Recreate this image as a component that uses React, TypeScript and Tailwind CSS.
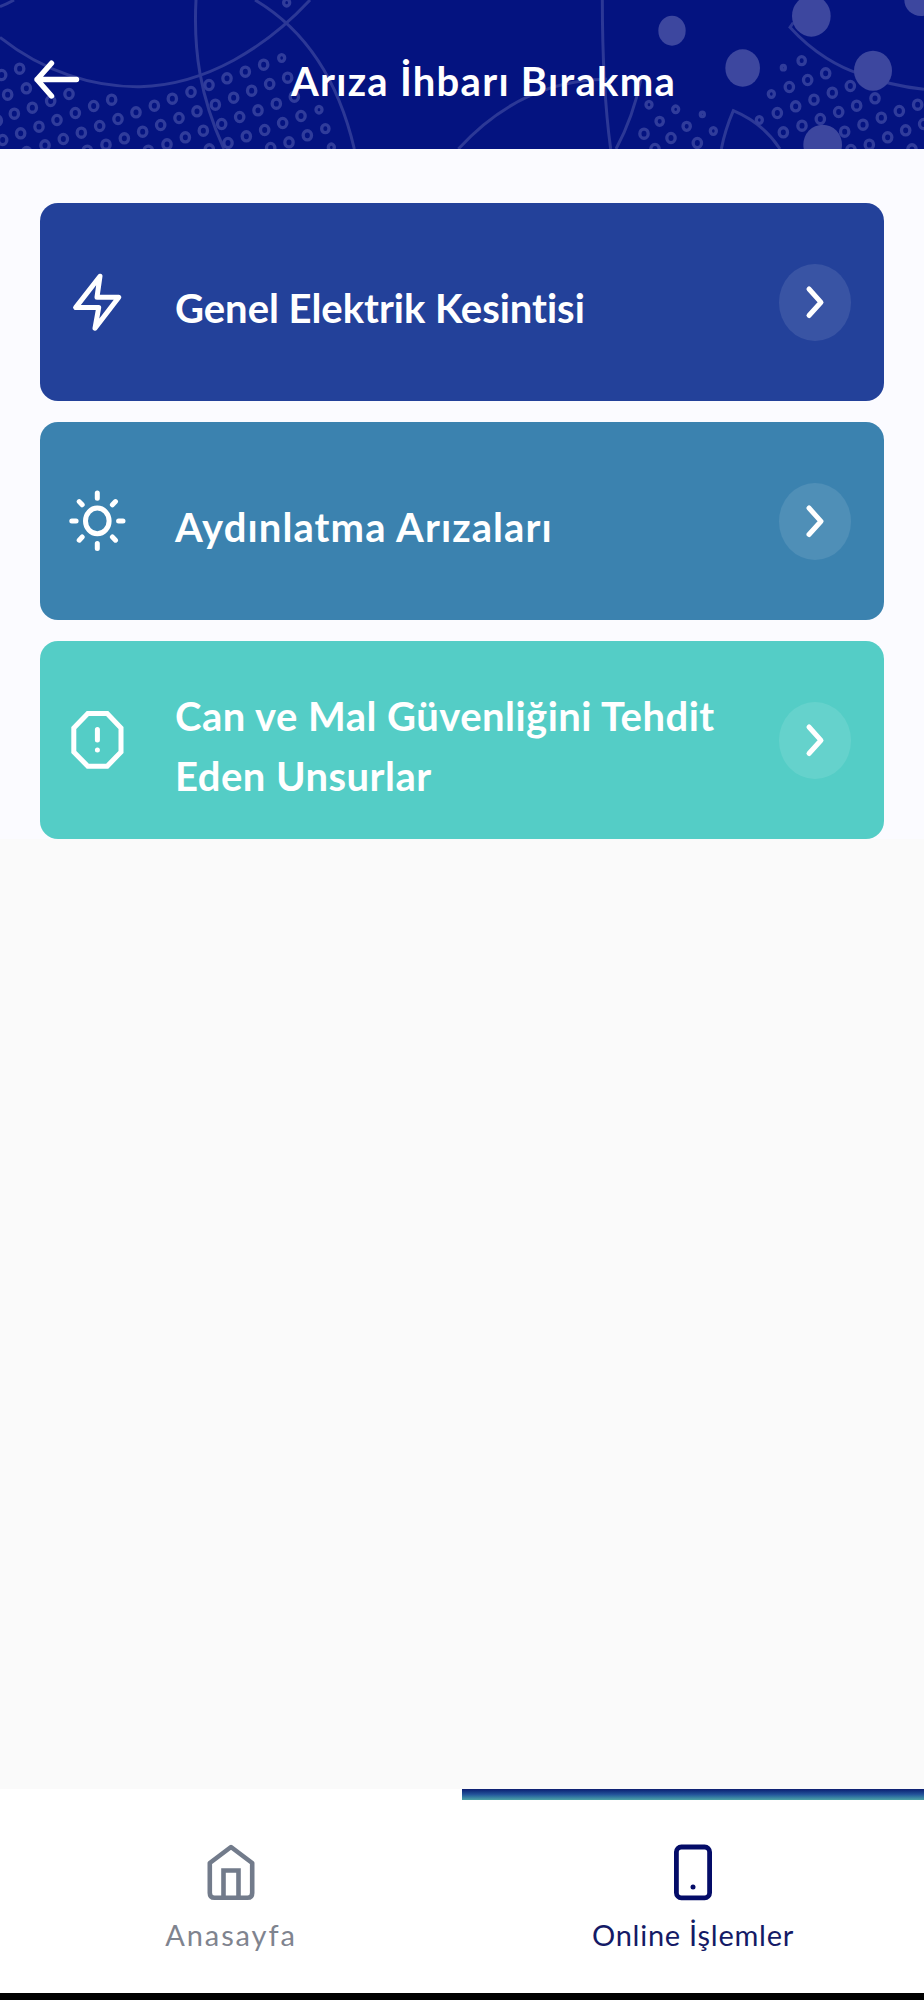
import type { ReactNode } from 'react';

interface ActionCardProps {
  title: string;
  className: string;
  icon: ReactNode;
  spacing: string;
}

// [x, y, size] in header pattern units (3 per pixel)
const rings: number[][] = [
  [5, 225], [59, 206], [23, 284], [79, 265], [43, 341], [97, 323], [152, 303], [207, 282], [-8, 362],
  [8, 420], [62, 400], [117, 380], [171, 360], [226, 339], [281, 318], [335, 299],
  [135, 436], [190, 417], [244, 398], [299, 378], [354, 357], [408, 337], [463, 317], [517, 296],
  [573, 276], [627, 255], [681, 235], [736, 215], [791, 194], [845, 174, 9],
  [318, 434], [373, 415], [428, 395], [482, 375], [537, 354], [591, 334], [646, 314], [701, 293],
  [755, 272], [809, 252], [863, 233], [501, 433], [556, 412], [610, 392], [665, 372], [719, 351],
  [774, 331], [829, 311], [883, 290], [684, 429], [739, 409], [794, 390], [848, 369], [903, 348],
  [957, 329, 9], [867, 427], [922, 406], [976, 386, 11], [262, 452], [445, 452], [628, 448],
  [812, 444], [994, 442, 9], [80, 456], [860, 8, 9],
  [2350, 203, 6], [2405, 182, 11], [2314, 282, 9], [2368, 261], [2423, 240], [2477, 220],
  [2278, 360, 9], [2332, 339], [2387, 319], [2442, 299], [2497, 278], [2551, 258],
  [2350, 397], [2406, 377], [2461, 357], [2516, 336], [2570, 317], [2625, 295],
  [2534, 395], [2589, 374], [2644, 353], [2698, 333], [2753, 314],
  [2553, 450], [2608, 434], [2663, 412], [2717, 391], [2771, 372], [2736, 448],
  [1947, 314, 9], [2027, 328, 9], [2107, 343, 6], [1932, 401], [1979, 364, 11], [2013, 414],
  [2060, 379, 11], [1965, 447], [2092, 429], [2140, 393, 9],
];

const bubbles: number[][] = [
  [2016, 92, 41, 45], [2228, 204, 52, 56], [2434, 48, 58, 62],
  [2619, 212, 57, 60], [2468, 434, 58, 60], [2763, 0, 50, 48],
];

function HeaderPattern() {
  return (
    <svg className="absolute inset-0 h-full w-full" viewBox="0 0 2772 447" preserveAspectRatio="none" fill="none">
      <g stroke="#2c3896" strokeWidth="9">
        <path d="M0 20Q25 10 42 0" />
        <path d="M0 112C130 215 280 262 420 260C620 255 800 140 930 0" />
        <path d="M588 0C580 150 600 290 672 447" />
        <path d="M765 0C900 80 1010 220 1063 447" />
        <path d="M1375 447C1500 310 1650 240 1820 238" />
        <path d="M1807 0C1807 150 1812 300 1832 447" />
        <path d="M1848 447Q1900 350 1922 240" />
        <path d="M2164 447Q2175 390 2200 332Q2290 370 2340 447" />
        <path d="M2380 68L2370 82C2440 160 2520 203 2580 222Q2670 257 2772 268" />
      </g>
      <g stroke="#303c9b" strokeWidth="10">
        {rings.map(([x, y, r = 12.5]) => (
          <ellipse key={`${x}-${y}`} cx={x} cy={y} rx={r} ry={r * 1.1} />
        ))}
      </g>
      <g fill="#3d479f">
        {bubbles.map(([x, y, rx, ry]) => (
          <ellipse key={`${x}-${y}`} cx={x} cy={y} rx={rx} ry={ry} />
        ))}
      </g>
    </svg>
  );
}

function BoltIcon() {
  return (
    <svg className="h-16 w-16" viewBox="0 0 64 64" fill="none" stroke="currentColor" strokeWidth="5" strokeLinecap="round" strokeLinejoin="round">
      <path d="M35 6.2L10.6 37.6H33.7L30 58.3L53.8 27.2H32Z" />
    </svg>
  );
}

function SunIcon() {
  return (
    <svg className="h-16 w-16" viewBox="0 0 64 64" fill="none" stroke="currentColor" strokeWidth="5" strokeLinecap="round">
      <ellipse cx="32.3" cy="31.9" rx="11.8" ry="12.8" />
      <path d="M32.3 4V9.2M32.3 54.4V59.6M6.8 31.9H11.1M53.6 31.9H58" />
      <path d="M14.2 12.6L17.2 15.8M50.5 12.6L47.4 15.8M14.2 51.2L17.2 48M50.5 51.2L47.4 48" />
    </svg>
  );
}

function AlertIcon() {
  return (
    <svg className="h-16 w-16" viewBox="0 0 64 64" fill="none" stroke="currentColor" strokeWidth="5" strokeLinecap="round">
      <path d="M22.8 5.6H42.2L56 20V44L42.2 58.2H22.8L8.8 44V20Z" />
      <path d="M32.4 21.5V32M32.4 41.9V42.1" />
    </svg>
  );
}

function ActionCard({ title, className, icon, spacing }: ActionCardProps) {
  return (
    <button className={`flex h-[198px] w-full items-center rounded-[18px] pr-[33px] pl-[25px] text-left text-white ${className}`}>
      {icon}
      <span className={`ml-[46px] flex-1 pt-[12px] text-[40px] leading-[60px] font-bold whitespace-pre-line ${spacing}`}>
        {title}
      </span>
      <span className="flex h-[77px] w-[72px] items-center justify-center rounded-[50%] bg-white/10">
        <svg className="h-9 w-6" viewBox="0 0 24 36" fill="none" stroke="currentColor" strokeWidth="5" strokeLinecap="round" strokeLinejoin="round">
          <path d="M6 5L18 18.3L6 31.5" />
        </svg>
      </span>
    </button>
  );
}

export default function App() {
  return (
    <div className="flex h-[2000px] w-[924px] flex-col overflow-hidden bg-[#fafafa] font-['Lato',sans-serif]">
      <header className="relative h-[149px] bg-[#041380] text-white">
        <HeaderPattern />
        <div className="relative flex h-full items-center">
          <button className="ml-8 pt-[9px]" aria-label="Geri">
            <svg className="h-12 w-12" viewBox="0 0 48 48" fill="none" stroke="currentColor" strokeWidth="5.4" strokeLinecap="round" strokeLinejoin="round">
              <path d="M44.5 24.5H5M19.5 8.2L5 24.5L19.5 41" />
            </svg>
          </button>
          <h1 className="ml-[211px] pt-[12px] text-[40px] leading-[60px] font-bold tracking-[1.28px] whitespace-nowrap">Arıza İhbarı Bırakma</h1>
        </div>
      </header>

      <main className="flex-1">
        <div className="flex flex-col gap-[21px] bg-[#fbfbff] px-10 pt-[54px]">
          <ActionCard title="Genel Elektrik Kesintisi" className="bg-[#23419a]" icon={<BoltIcon />} spacing="tracking-[-0.03px]" />
          <ActionCard title="Aydınlatma Arızaları" className="bg-[#3b82af]" icon={<SunIcon />} spacing="tracking-[1.1px]" />
          <ActionCard title={'Can ve Mal Güvenliğini Tehdit\nEden Unsurlar'} className="bg-[#54cdc6]" icon={<AlertIcon />} spacing="tracking-[0.47px]" />
        </div>
      </main>

      <nav className="grid h-[204px] grid-cols-2 bg-white text-[29px] leading-10">
        <button className="flex flex-col items-center pt-[52px] text-[#7f848f]">
          <svg className="h-[62px] w-14" viewBox="0 0 56 62" fill="none" stroke="#727b8b" strokeWidth="4.6" strokeLinejoin="round">
            <path d="M28 6L49.2 22V52Q49.2 56.8 44.5 56.8H11.5Q6.8 56.8 6.8 52V22Z" />
            <path d="M20.5 56V29.5H35.5V56" strokeLinejoin="miter" />
          </svg>
          <span className="mt-3 tracking-[1.9px]">Anasayfa</span>
        </button>
        <button className="flex flex-col items-center text-[#141a66]">
          <span className="h-[11px] w-full bg-linear-to-b from-[#0d1c70] via-[#24549a] to-[#4ea3a6]" />
          <svg className="mt-[41px] h-[62px] w-14" viewBox="0 0 56 62" fill="none" stroke="#040c68" strokeWidth="4.8">
            <rect x="11.4" y="6" width="33.2" height="50.8" rx="5" />
            <circle cx="28" cy="46" r="2.5" fill="#040c68" stroke="none" />
          </svg>
          <span className="mt-3 tracking-[0.75px]">Online İşlemler</span>
        </button>
      </nav>
      <div className="h-[7px] bg-black" />
    </div>
  );
}
